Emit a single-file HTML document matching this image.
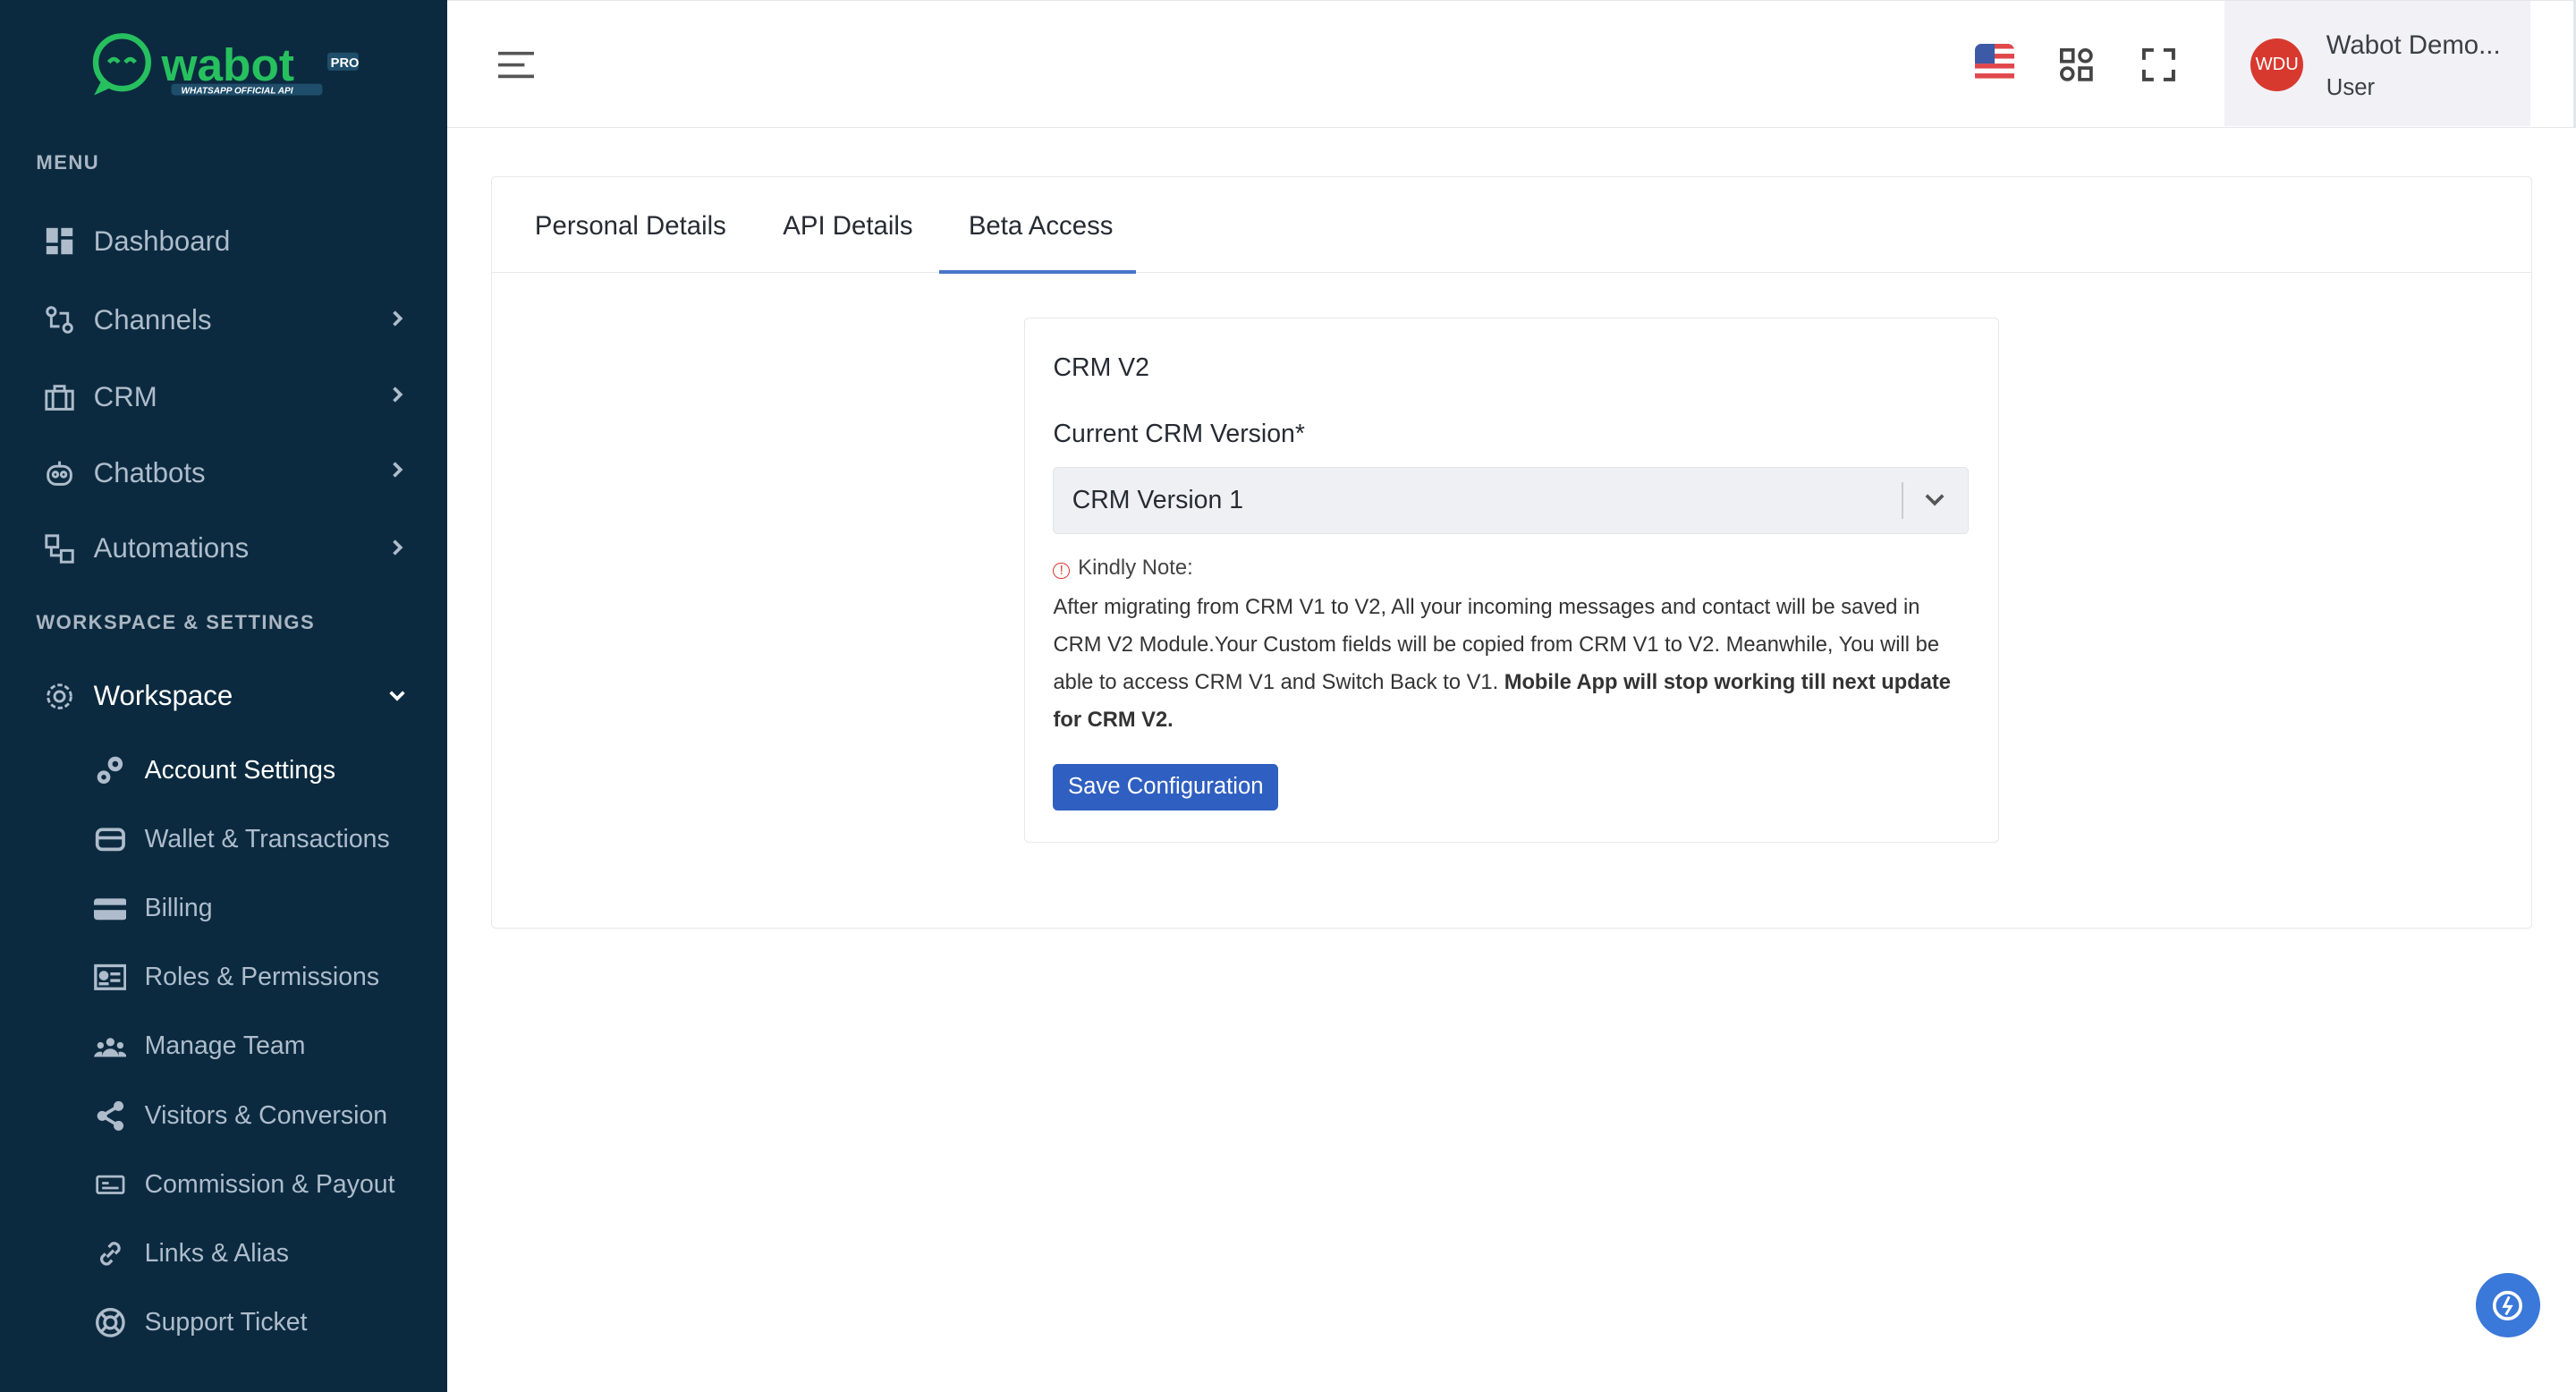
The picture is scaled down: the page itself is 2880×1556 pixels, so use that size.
<!DOCTYPE html>
<html><head><meta charset="utf-8"><style>
html,body{margin:0;padding:0;}
body{width:1568px;height:847px;zoom:1.83673;overflow:hidden;font-family:"Liberation Sans",sans-serif;background:#fff;position:relative;}
.sb{position:absolute;left:0;top:0;width:272px;height:847px;background:#0b2a3f;color:#aebccb;}
.sec{position:absolute;left:22px;font-size:12px;letter-spacing:.8px;color:#aab6c2;font-weight:bold;}
.it{position:absolute;left:27px;font-size:17px;color:#aebccb;display:flex;align-items:center;}
.it svg{margin-right:12px}
.chev{position:absolute;left:237px;}
.sub{position:absolute;left:57px;font-size:15.5px;color:#aebccb;display:flex;align-items:center;}
.sub svg{margin-right:11px}
.hdr{position:absolute;left:272px;top:0;right:0;height:77px;border-top:1px solid #e4e6ea;border-bottom:1px solid #e4e6ea;border-right:2px solid #e4e6ea;background:#fff;}
.card{position:absolute;left:299px;top:107px;width:1241px;height:457px;border:1px solid #e6e8eb;border-radius:3px;}
.tabs{height:58px;border-bottom:1px solid #e6e8eb;position:relative;}
.tab{position:absolute;top:21px;font-size:16px;color:#262b33;}
.inner{position:absolute;left:324px;top:86px;width:592px;height:318px;border:1px solid #e6e8eb;border-radius:3px;}
</style></head><body>
<div class="sb">
 <svg style="position:absolute;left:52px;top:18px" width="170" height="42" viewBox="0 0 170 42">
  <circle cx="22" cy="20" r="16" fill="none" stroke="#27c05f" stroke-width="3.5"/>
  <path d="M10 30 L5 40 L16 35" fill="#27c05f"/>
  <path d="M14 20 q3-4 6 0 M24 20 q3-4 6 0" stroke="#27c05f" stroke-width="2.5" fill="none"/>
  <text x="46" y="31" font-family="Liberation Sans" font-weight="bold" font-size="28" fill="#27c05f">wabot</text>
  <rect x="147" y="14" width="19" height="11" rx="2" fill="#1f4e6b"/>
  <text x="149" y="23" font-size="8" font-weight="bold" fill="#fff" font-family="Liberation Sans">PRO</text>
  <rect x="52" y="33" width="92" height="7" rx="2" fill="#1f4e6b"/>
  <text x="58" y="39" font-size="5.5" font-weight="bold" font-style="italic" fill="#fff" font-family="Liberation Sans">WHATSAPP OFFICIAL API</text>
 </svg>
 <div class="sec" style="top:92px">MENU</div>
 <div class="it" style="top:137px"><svg width="18" height="18"><rect x="1" y="1" width="7" height="9" fill="#aebccb"/><rect x="10" y="1" width="7" height="5" fill="#aebccb"/><rect x="1" y="12" width="7" height="5" fill="#aebccb"/><rect x="10" y="8" width="7" height="9" fill="#aebccb"/></svg>Dashboard</div>
 <div class="it" style="top:185px"><svg width="18" height="18" fill="none" stroke="#aebccb" stroke-width="1.6"><circle cx="4" cy="4" r="2.5"/><circle cx="14" cy="14" r="2.5"/><path d="M4 7v6h5M14 11V5H9"/></svg>Channels</div><svg class="chev" style="top:188px" width="10" height="12" fill="none" stroke="#aebccb" stroke-width="2"><path d="M3 2l4 4-4 4"/></svg>
 <div class="it" style="top:232px"><svg width="18" height="18" fill="none" stroke="#aebccb" stroke-width="1.6"><rect x="1" y="5" width="16" height="11"/><path d="M6 5V2h6v3M5 5v11M13 5v11"/></svg>CRM</div><svg class="chev" style="top:234px" width="10" height="12" fill="none" stroke="#aebccb" stroke-width="2"><path d="M3 2l4 4-4 4"/></svg>
 <div class="it" style="top:278px"><svg width="18" height="18" fill="none" stroke="#aebccb" stroke-width="1.6"><rect x="2" y="5" width="14" height="11" rx="5"/><circle cx="6.5" cy="10" r="1.5"/><circle cx="11.5" cy="10" r="1.5"/><path d="M9 5V2"/></svg>Chatbots</div><svg class="chev" style="top:280px" width="10" height="12" fill="none" stroke="#aebccb" stroke-width="2"><path d="M3 2l4 4-4 4"/></svg>
 <div class="it" style="top:324px"><svg width="18" height="18" fill="none" stroke="#aebccb" stroke-width="1.6"><rect x="1" y="1" width="7" height="7"/><rect x="10" y="10" width="7" height="7"/><path d="M4 8v5h6"/></svg>Automations</div><svg class="chev" style="top:327px" width="10" height="12" fill="none" stroke="#aebccb" stroke-width="2"><path d="M3 2l4 4-4 4"/></svg>
 <div class="sec" style="top:372px">WORKSPACE &amp; SETTINGS</div>
 <div class="it" style="top:414px;color:#fff"><svg width="18" height="18" fill="none" stroke="#aebccb" stroke-width="1.6"><circle cx="9" cy="9" r="7" stroke-dasharray="3 1.5"/><circle cx="9" cy="9" r="3"/></svg>Workspace</div><svg class="chev" style="top:419px;left:236px" width="12" height="10" fill="none" stroke="#fff" stroke-width="2"><path d="M2 2l4 4 4-4"/></svg>
 <div class="sub" style="top:459px;color:#fff"><svg width="20" height="20" fill="#aebccb"><circle cx="13" cy="6" r="4.5"/><circle cx="6" cy="14" r="4"/><circle cx="13" cy="6" r="1.8" fill="#0b2a3f"/><circle cx="6" cy="14" r="1.5" fill="#0b2a3f"/></svg>Account Settings</div>
 <div class="sub" style="top:501px"><svg width="20" height="20" fill="none" stroke="#aebccb" stroke-width="2"><rect x="2" y="4" width="16" height="12" rx="3"/><path d="M2 9h16"/></svg>Wallet &amp; Transactions</div>
 <div class="sub" style="top:543px"><svg width="20" height="20" fill="#aebccb"><rect x="0" y="4" width="20" height="13" rx="2"/><rect x="0" y="8" width="20" height="3" fill="#0b2a3f"/></svg>Billing</div>
 <div class="sub" style="top:585px"><svg width="20" height="20" fill="none" stroke="#aebccb" stroke-width="1.8"><rect x="1" y="3" width="18" height="14"/><circle cx="6" cy="9" r="2" fill="#aebccb"/><path d="M10 8h6M10 12h6M3 14h6"/></svg>Roles &amp; Permissions</div>
 <div class="sub" style="top:627px"><svg width="20" height="20" fill="#aebccb"><circle cx="10" cy="7" r="2.5"/><circle cx="4" cy="9" r="2"/><circle cx="16" cy="9" r="2"/><path d="M5 16a5 5 0 0 1 10 0zM0 16a4 4 0 0 1 5-3v3zM20 16a4 4 0 0 0-5-3v3z"/></svg>Manage Team</div>
 <div class="sub" style="top:669px"><svg width="20" height="20" fill="#aebccb"><circle cx="15" cy="4" r="3"/><circle cx="5" cy="10" r="3"/><circle cx="15" cy="16" r="3"/><path d="M5 10L15 4M5 10l10 6" stroke="#aebccb" stroke-width="2"/></svg>Visitors &amp; Conversion</div>
 <div class="sub" style="top:711px"><svg width="20" height="20" fill="none" stroke="#aebccb" stroke-width="1.5"><rect x="2" y="5" width="16" height="10" rx="1"/><path d="M5 9h4M5 12h10"/></svg>Commission &amp; Payout</div>
 <div class="sub" style="top:753px"><svg width="20" height="20" fill="none" stroke="#aebccb" stroke-width="1.8"><path d="M8 12l4-4M9 6l2-2a3 3 0 0 1 4 4l-2 2M11 14l-2 2a3 3 0 0 1-4-4l2-2"/></svg>Links &amp; Alias</div>
 <div class="sub" style="top:795px"><svg width="20" height="20" fill="none" stroke="#aebccb" stroke-width="1.8"><circle cx="10" cy="10" r="8"/><circle cx="10" cy="10" r="3.5"/><path d="M4 4l3.5 3.5M16 4l-3.5 3.5M4 16l3.5-3.5M16 16l-3.5-3.5"/></svg>Support Ticket</div>
</div>
<div class="hdr">
 <svg style="position:absolute;left:31px;top:30px" width="22" height="18" stroke="#555" stroke-width="2"><path d="M0 2h22M0 9h16M0 16h22"/></svg>
 <svg style="position:absolute;left:930px;top:26px" width="24" height="24"><clipPath id="c"><rect width="24" height="24" rx="4"/></clipPath><g clip-path="url(#c)"><rect width="24" height="24" fill="#fff"/><g fill="#e0474c"><rect y="0" width="24" height="3"/><rect y="6" width="24" height="3"/><rect y="12" width="24" height="3"/><rect y="18" width="24" height="3"/></g><rect width="12" height="12" fill="#3c5aa6"/></g></svg>
 <svg style="position:absolute;left:982px;top:29px" width="20" height="20" fill="none" stroke="#444" stroke-width="2"><rect x="1" y="1" width="7" height="7"/><circle cx="15.5" cy="4.5" r="3.5"/><circle cx="4.5" cy="15.5" r="3.5"/><rect x="12" y="12" width="7" height="7"/></svg>
 <svg style="position:absolute;left:1032px;top:29px" width="20" height="20" fill="none" stroke="#444" stroke-width="2.2"><path d="M1 7V1h6M13 1h6v6M19 13v6h-6M7 19H1v-6"/></svg>
 <div style="position:absolute;left:1082px;top:0;width:186px;height:76px;background:#f1f1f6"></div>
 <div style="position:absolute;left:1098px;top:23px;width:32px;height:32px;border-radius:50%;background:#d8392f;color:#fff;font-size:11px;text-align:center;line-height:32px">WDU</div>
 <div style="position:absolute;left:1144px;top:18px;font-size:16px;color:#3b3f45">Wabot Demo...</div>
 <div style="position:absolute;left:1144px;top:45px;font-size:14px;color:#3b3f45">User</div>
</div>
<div class="card">
 <div class="tabs">
  <div class="tab" style="left:26px">Personal Details</div>
  <div class="tab" style="left:177px">API Details</div>
  <div class="tab" style="left:290px">Beta Access</div>
  <div style="position:absolute;left:272px;width:120px;bottom:-1px;height:2px;background:#4a74c9"></div>
 </div>
 <div class="inner">
  <div style="position:absolute;left:17px;top:21px;font-size:15.5px;color:#262b33">CRM V2</div>
  <div style="position:absolute;left:17px;top:61px;font-size:15.5px;color:#262b33">Current CRM Version*</div>
  <div style="position:absolute;left:17px;top:90px;width:556px;height:40px;background:#eff0f4;border:1px solid #e2e4e8;border-radius:3px">
   <div style="position:absolute;left:11px;top:11px;font-size:15.5px;color:#262b33">CRM Version 1</div>
   <div style="position:absolute;left:516px;top:9px;width:1px;height:22px;background:#c9ccd2"></div>
   <svg style="position:absolute;left:530px;top:15px" width="12" height="10" fill="none" stroke="#555" stroke-width="2"><path d="M1 2l5 5 5-5"/></svg>
  </div>
  <div style="position:absolute;left:17px;top:144px;font-size:13px;color:#444"><span style="display:inline-block;width:9px;height:9px;border:1px solid #d8392f;border-radius:50%;color:#d8392f;font-size:8px;line-height:9px;text-align:center;margin-right:5px">!</span>Kindly Note:</div>
  <div style="position:absolute;left:17px;top:164px;width:560px;font-size:12.9px;line-height:23px;color:#333">After migrating from CRM V1 to V2, All your incoming messages and contact will be saved in CRM V2 Module.Your Custom fields will be copied from CRM V1 to V2. Meanwhile, You will be able to access CRM V1 and Switch Back to V1. <b>Mobile App will stop working till next update for CRM V2.</b></div>
  <div style="position:absolute;left:17px;top:271px;width:137px;height:28px;background:#2f5fc1;border-radius:3px;color:#fff;font-size:14px;text-align:center;line-height:28px">Save Configuration</div>
 </div>
</div>
<div style="position:absolute;left:1507px;top:775px;width:39px;height:39px;border-radius:50%;background:#3a78d9">
 <svg style="position:absolute;left:10px;top:10px" width="19" height="19" fill="none" stroke="#fff" stroke-width="2"><circle cx="9.5" cy="9.5" r="8"/><path d="M10.5 4l-3 6h4l-3 5" stroke-width="1.6"/></svg>
</div>
</body></html>
